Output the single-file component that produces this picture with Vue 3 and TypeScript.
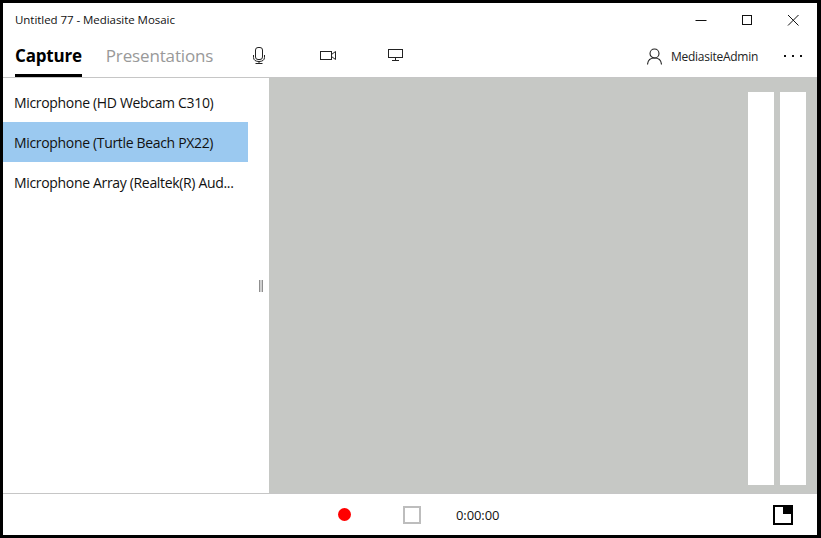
<script setup lang="ts">
const devices: { name: string; selected?: boolean }[] = [
  { name: 'Microphone (HD Webcam C310)' },
  { name: 'Microphone (Turtle Beach PX22)', selected: true },
  { name: 'Microphone Array (Realtek(R) Aud...' },
]
</script>

<template>
  <div class="window">
    <header class="titlebar">
      <span class="title">Untitled 77 - Mediasite Mosaic</span>
      <div class="winctl">
        <svg width="46" height="32" viewBox="0 0 46 32"><path d="M17.500 20.500H28.500" stroke="#111" fill="none"/></svg>
        <svg width="46" height="32" viewBox="0 0 46 32"><rect x="18.500" y="15.500" width="9" height="9" stroke="#111" fill="none"/></svg>
        <svg width="46" height="32" viewBox="0 0 46 32"><path d="M18 15L28.500 25.500M28.500 15L18 25.500" stroke="#111" fill="none"/></svg>
      </div>
    </header>
    <nav class="navbar">
      <div class="tabs">
        <span class="tab active">Capture</span>
        <span class="tab">Presentations</span>
      </div>
      <div class="sources">
        <svg class="mic" width="12" height="17" viewBox="0 0 12 17" fill="none" stroke="#222" stroke-width="1">
          <rect x="2.500" y="0.500" width="7" height="12" rx="2.500"/>
          <path d="M0.500 8V10.500C0.500 13 2.500 14.500 6 14.500C9.500 14.500 11.500 13 11.500 10.500V8M6 14.500V16.500M2.500 16.500H9.500"/>
        </svg>
        <svg class="cam" width="16" height="9" viewBox="0 0 16 9" fill="none" stroke="#222" stroke-width="1">
          <rect x="0.500" y="0.500" width="11" height="8"/>
          <path d="M11.500 3.500L15.500 0.500V8.500L11.500 5.500"/>
        </svg>
        <svg class="screen" width="15" height="12" viewBox="0 0 15 12" fill="none" stroke="#222" stroke-width="1">
          <rect x="0.500" y="0.500" width="14" height="8"/>
          <path d="M7.500 9V11.500M4 11.500H11"/>
        </svg>
      </div>
      <div class="account">
        <svg width="15" height="17" viewBox="0 0 15 17" fill="none" stroke="#222" stroke-width="1.100">
          <circle cx="7.500" cy="5.500" r="4.500"/>
          <path d="M0.500 16.500C0.800 12.500 3.500 10 7.500 10C11.500 10 14.200 12.500 14.500 16.500"/>
        </svg>
        <span class="user">MediasiteAdmin</span>
        <span class="more"><i></i><i></i><i></i></span>
      </div>
    </nav>
    <main class="body">
      <aside class="side">
        <ul class="list">
          <li v-for="d in devices" :key="d.name" class="item" :class="{ selected: d.selected }">
            <span class="item-text">{{ d.name }}</span>
          </li>
        </ul>
        <span class="grip"></span>
      </aside>
      <section class="stage">
        <div class="meter"></div>
        <div class="meter"></div>
      </section>
    </main>
    <footer class="footer">
      <div class="controls">
        <span class="rec"></span>
        <span class="stop"></span>
        <span class="time">0:00:00</span>
      </div>
      <span class="pip"><i></i></span>
    </footer>
  </div>
</template>

<style>
html, body { margin: 0; background: #000; }
</style>

<style scoped>
.window {
  width: 821px;
  height: 538px;
  box-sizing: border-box;
  border-style: solid;
  border-color: #000;
  border-width: 3px 4px 3px 3px;
  background: #fff;
  display: flex;
  flex-direction: column;
  font-family: "Open Sans", "Noto Sans", sans-serif;
  color: #111;
  overflow: hidden;
}
.titlebar {
  height: 32px;
  display: flex;
  align-items: center;
  justify-content: space-between;
  padding-left: 12px;
}
.title { font-size: 11.500px; letter-spacing: -0.05px; padding-top: 1px; }
.winctl { display: flex; margin-right: 1px; align-self: flex-start; }
.winctl svg { display: block; margin-top: -3px; }
.navbar {
  height: 42px;
  border-bottom: 1px solid #c6c6c6;
  display: flex;
  align-items: stretch;
  position: relative;
}
.tabs { display: flex; gap: 24px; padding-left: 12px; width: 235px; }
.tab {
  font-size: 17px;
  line-height: 42px;
  color: #999;
  letter-spacing: -0.15px;
  height: 42px;
  box-sizing: border-box;
}
.tab.active {
  color: #000;
  font-weight: 700;
  letter-spacing: -0.2px;
  border-bottom: 3px solid #000;
}
.sources {
  display: flex;
  align-items: center;
  gap: 54px;
  margin-left: 3px;
  padding-bottom: 1px;
}
.cam { margin-left: 1px; }
.screen { margin-top: -2px; margin-left: -2px; }
.account {
  margin-left: auto;
  display: flex;
  align-items: center;
}
.user { font-size: 12px; margin-left: 9px; letter-spacing: -0.27px; color: #222; }
.more { display: flex; gap: 6px; margin: 0 15px 0 26px; }
.more i { width: 2px; height: 2px; background: #111; display: block; }
.body { flex: 1; display: flex; min-height: 0; }
.side { width: 266px; position: relative; flex: none; }
.list { list-style: none; margin: 0; padding: 4px 0 0; width: 245px; }
.item {
  height: 40px;
  display: flex;
  align-items: center;
  padding: 0 12px 0 11px;
  box-sizing: border-box;
  font-size: 14px;
  letter-spacing: -0.33px;
}
.item-text { white-space: nowrap; }
.item.selected { background: #9bc9f0; }
.grip {
  position: absolute;
  left: 256px;
  top: 202px;
  width: 2px;
  height: 12px;
  border-left: 1px solid #8f8f8f;
  border-right: 1px solid #8f8f8f;
  background: #d0d0d0;
}
.stage {
  flex: 1;
  background: #c6c8c5;
  display: flex;
  justify-content: flex-end;
  gap: 6px;
  padding: 14px 11px 8px 0;
}
.meter { width: 26px; background: #fff; }
.footer {
  height: 41px;
  border-top: 1px solid #c6c6c6;
  flex: none;
  display: flex;
  align-items: center;
  position: relative;
}
.controls { display: flex; align-items: center; margin-left: 335px; }
.rec { width: 13px; height: 13px; border-radius: 50%; background: #f00; }
.stop { width: 14px; height: 14px; border: 2px solid #bdbdbd; margin-left: 52px; }
.time { font-size: 13px; margin-left: 35px; letter-spacing: -0.1px; }
.pip {
  margin-left: auto;
  margin-right: 24px;
  width: 16px;
  height: 16px;
  border: 2px solid #000;
  position: relative;
  display: block;
}
.pip i { position: absolute; right: 0; top: 0; width: 8px; height: 7px; background: #000; }
</style>
